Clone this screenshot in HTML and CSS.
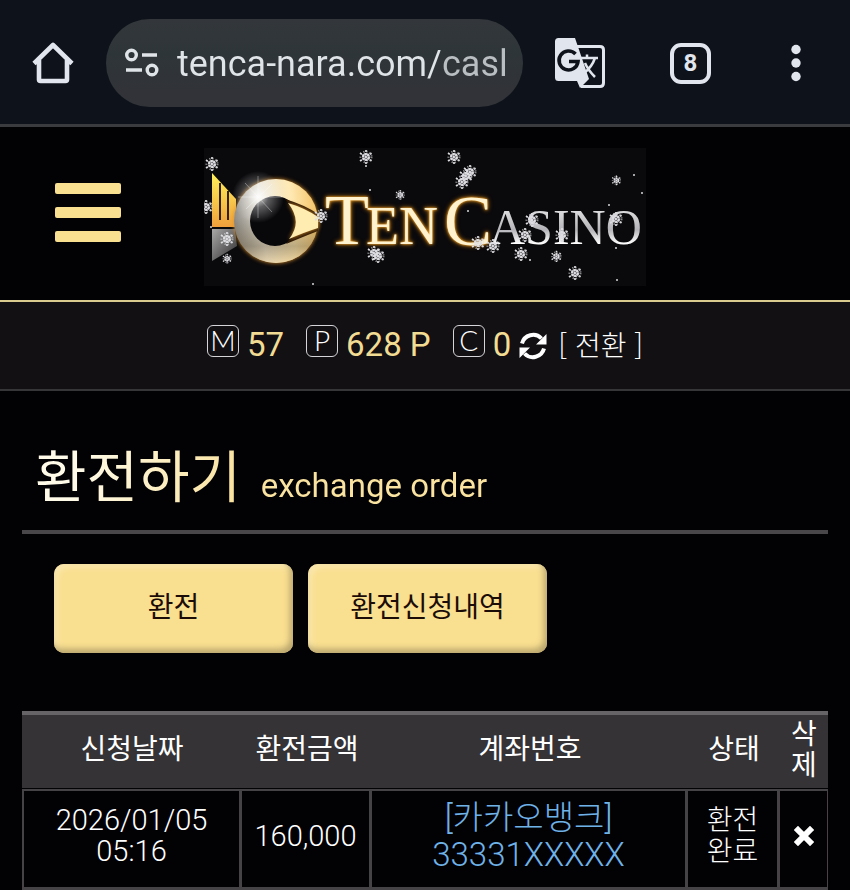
FILE: index.html
```html
<!DOCTYPE html>
<html lang="ko">
<head>
    <meta charset="UTF-8">
    <meta name="viewport" content="width=device-width, initial-scale=1.0">
    <title>환전하기</title>
    <link rel="stylesheet" href="styles.css">
</head>
<body>
    <div class="browser-bar">
        <button class="icon-btn home-btn" aria-label="Home">
            <svg width="42" height="42" viewBox="0 0 42 42" fill="none" stroke="#e1e5ee" stroke-width="4.6" stroke-linejoin="round">
                <path d="M2 21.500 21 3l19 18.500M7 18V37.500Q7 39 8.500 39H33.500Q35 39 35 37.500V18"/>
            </svg>
        </button>
        <div class="url-box">
            <svg width="34" height="30" viewBox="0 0 34 30" fill="none" stroke="#dfe4e8" stroke-width="3.400">
                <circle cx="6.500" cy="7" r="4.800"/>
                <path d="M17 7h15M1 22h16"/>
                <circle cx="27" cy="22" r="4.800"/>
            </svg>
            <input class="url-input" type="text" aria-label="Address" value="tenca-nara.com/casl">
        </div>
        <button class="icon-btn translate-btn" aria-label="Translate">
            <svg width="50" height="50" viewBox="0 0 50 50">
                <path d="M22 8.500H45Q48.500 8.500 48.500 12V45Q48.500 48.500 45 48.500H26" fill="none" stroke="#e1e5ee" stroke-width="3"/>
                <path d="M3.500 0H20L34 41 25 50 22 43H3.500Q0 43 0 39.500V3.500Q0 0 3.500 0Z" fill="#e1e5ee"/>
                <path d="M26 20h17M32 16.500V20M40 20Q37 29 29 35M30 25Q33 32 40 39" fill="none" stroke="#e1e5ee" stroke-width="2.500"/>
                <path d="M20.500 16A9.500 9.500 0 1 0 23 23.500H14" fill="none" stroke="#0e131b" stroke-width="3.600"/>
            </svg>
        </button>
        <button class="icon-btn tabs-btn">8</button>
        <button class="icon-btn more-btn" aria-label="More">
            <svg width="10" height="38" viewBox="0 0 10 38" fill="#e1e5ee">
                <circle cx="5" cy="5.500" r="4.700"/>
                <circle cx="5" cy="19" r="4.700"/>
                <circle cx="5" cy="32.500" r="4.700"/>
            </svg>
        </button>
    </div>

    <header class="site-header">
        <button class="menu-btn" aria-label="Menu">
            <span></span><span></span><span></span>
        </button>
        <a class="logo" href="#" aria-label="Ten Casino">
            <svg width="442" height="138" viewBox="0 0 442 138">
                <defs>
                    <linearGradient id="ring" x1="0" y1="0.600" x2="1" y2="0.500">
                        <stop offset="0" stop-color="#8b8985"/>
                        <stop offset="0.350" stop-color="#e8e3d6"/>
                        <stop offset="0.700" stop-color="#ffeab5"/>
                        <stop offset="1" stop-color="#f4c469"/>
                    </linearGradient>
                    <linearGradient id="shade" x1="0" y1="0" x2="0" y2="1">
                        <stop offset="0.450" stop-color="#5b4a2a" stop-opacity="0"/>
                        <stop offset="0.800" stop-color="#6a5a3c" stop-opacity="0.450"/>
                        <stop offset="1" stop-color="#e9c98b" stop-opacity="0.500"/>
                    </linearGradient>
                    <linearGradient id="tower" x1="0" y1="0" x2="0" y2="1">
                        <stop offset="0" stop-color="#fff05a"/>
                        <stop offset="1" stop-color="#f0a03c"/>
                    </linearGradient>
                    <linearGradient id="base" x1="0" y1="0" x2="1" y2="1">
                        <stop offset="0" stop-color="#aaa9a8"/>
                        <stop offset="1" stop-color="#2e2c2e"/>
                    </linearGradient>
                    <linearGradient id="silver" x1="0" y1="0" x2="0" y2="1">
                        <stop offset="0.200" stop-color="#dddcde"/>
                        <stop offset="0.550" stop-color="#b5b4b8"/>
                        <stop offset="0.800" stop-color="#fff"/>
                    </linearGradient>
                    <radialGradient id="flare">
                        <stop offset="0" stop-color="#fff" stop-opacity="0.900"/>
                        <stop offset="0.400" stop-color="#fff" stop-opacity="0.350"/>
                        <stop offset="1" stop-color="#fff" stop-opacity="0"/>
                    </radialGradient>
                    <g id="flake" fill="none" stroke="#dedee2">
                        <circle r="4" fill="#dedee2" fill-opacity="0.450" stroke="none"/>
                        <path d="M0-7V7M-6-4 6 4M-6 4 6-4" stroke-width="1.700" stroke-dasharray="2 1"/>
                        <circle r="3" stroke-width="2" stroke-dasharray="2 1"/>
                        <circle r="5.500" stroke-width="2" stroke-opacity="0.600" stroke-dasharray="1.300 1.900"/>
                    </g>
                </defs>
                <rect width="442" height="138" fill="#0a090b"/>
                <path d="M8 25 32 51V79H8Z" fill="url(#tower)"/>
                <path d="M16 35V72M24 43V72" stroke="#33230a" stroke-width="2"/>
                <path d="M8 81H31L33 98 8 113Z" fill="url(#base)"/>
                <g class="gold-glow">
                    <circle cx="72" cy="73" r="42" fill="url(#ring)"/>
                    <circle cx="72" cy="73" r="42" fill="url(#shade)"/>
                </g>
                <circle cx="71" cy="73" r="25" fill="#08070a"/>
                <path d="M81 51Q101 57 114 66V83Q101 88 82 96Q102 74 81 51Z" fill="#2a1604"/>
                <path d="M84 55Q101 60 114 69V80Q101 84 85 91Q99 74 84 55Z" fill="#ffecb0" class="gold-glow"/>
                <circle cx="54" cy="49" r="26" fill="url(#flare)"/>
                <path d="M54 28V70M34 49H78M41 35 68 64M68 36 42 61" stroke="#fff" stroke-opacity="0.350"/>
                <text class="logo-text logo-gold" y="96"><tspan x="121" class="cap">T</tspan><tspan x="162">EN</tspan></text>
                <text class="logo-text logo-gold cap" x="240" y="97">C</text>
                <text class="logo-text logo-silver" x="285" y="96">ASINO</text>
                <g>
                    <use href="#flake" x="8" y="16"/>
                    <use href="#flake" x="162" y="9"/>
                    <use href="#flake" x="196" y="47" transform="translate(59 14) scale(.7)"/>
                    <use href="#flake" x="117" y="68"/>
                    <use href="#flake" x="2" y="59"/>
                    <use href="#flake" x="23" y="91"/>
                    <use href="#flake" x="23" y="111" transform="translate(7 33) scale(.7)"/>
                    <use href="#flake" x="170" y="105"/>
                    <use href="#flake" x="174" y="108"/>
                    <use href="#flake" x="250" y="9"/>
                    <use href="#flake" x="266" y="24"/>
                    <use href="#flake" x="262" y="28"/>
                    <use href="#flake" x="258" y="34"/>
                    <use href="#flake" x="412" y="32" transform="translate(124 10) scale(.7)"/>
                    <use href="#flake" x="412" y="71"/>
                    <use href="#flake" x="321" y="87"/>
                    <use href="#flake" x="328" y="72"/>
                    <use href="#flake" x="358" y="87"/>
                    <use href="#flake" x="274" y="95"/>
                    <use href="#flake" x="289" y="98"/>
                    <use href="#flake" x="317" y="106"/>
                    <use href="#flake" x="353" y="108" transform="translate(70 22) scale(.8)"/>
                    <use href="#flake" x="371" y="125"/>
                </g>
                <g fill="#d8d8dc">
                    <circle cx="162" cy="18" r="1"/>
                    <circle cx="166" cy="42" r="1"/>
                    <circle cx="109" cy="136" r="1"/>
                    <circle cx="264" cy="63" r="1"/>
                    <circle cx="430" cy="27" r="1"/>
                    <circle cx="438" cy="45" r="1"/>
                    <circle cx="405" cy="57" r="1"/>
                    <circle cx="412" cy="100" r="1"/>
                    <circle cx="413" cy="132" r="1"/>
                    <circle cx="326" cy="112" r="1"/>
                    <circle cx="7" cy="79" r="1"/>
                </g>
            </svg>
        </a>
    </header>

    <div class="balance-bar">
        <div class="balance"><span class="badge">M</span><span class="amount">57</span></div>
        <div class="balance"><span class="badge">P</span><span class="amount">628 P</span></div>
        <div class="balance">
            <span class="badge">C</span><span class="amount">0</span>
            <button class="convert-btn">
                <svg width="28" height="28" viewBox="0 0 28 28">
                    <path d="M3 11.500A11.500 11.500 0 0 1 22.500 6.500M25 16.500A11.500 11.500 0 0 1 5.500 21.500" fill="none" stroke="#fff" stroke-width="4"/>
                    <path d="M27.500 2V12.500H17ZM.500 26V15.500H11Z" fill="#fff"/>
                </svg>
                <span>[ 전환 ]</span>
            </button>
        </div>
    </div>

    <main class="content">
        <h1 class="page-title">환전하기 <small>exchange order</small></h1>

        <div class="tabs">
            <button class="tab-btn">환전</button>
            <button class="tab-btn">환전신청내역</button>
        </div>

        <table class="order-table">
            <colgroup>
                <col class="col-date">
                <col class="col-amount">
                <col>
                <col class="col-status">
                <col class="col-delete">
            </colgroup>
            <thead>
                <tr>
                    <th>신청날짜</th>
                    <th>환전금액</th>
                    <th>계좌번호</th>
                    <th>상태</th>
                    <th>삭<br>제</th>
                </tr>
            </thead>
            <tbody>
                <tr>
                    <td class="num">2026/01/05<br>05:16</td>
                    <td class="num">160,000</td>
                    <td class="account">[카카오뱅크]<br>33331XXXXX</td>
                    <td>환전<br>완료</td>
                    <td>
                        <button class="delete-btn" aria-label="삭제">
                            <svg width="20" height="20" viewBox="0 0 20 20">
                                <path d="M4 4 16 16M16 4 4 16" stroke="#fff" stroke-width="6" stroke-linecap="square"/>
                            </svg>
                        </button>
                    </td>
                </tr>
            </tbody>
        </table>
    </main>
</body>
</html>
```
FILE: styles.css
```css
* {
    box-sizing: border-box;
}
body {
    margin: 0;
    background: #020104;
    color: #fff;
    font-family: Roboto, "Noto Sans CJK KR", sans-serif;
    font-size: 28px;
    font-weight: 300;
}
button {
    padding: 0;
    border: none;
    background: none;
    color: inherit;
    font: inherit;
    cursor: pointer;
}
svg {
    display: block;
}

/* Browser bar */
.browser-bar {
    display: flex;
    align-items: center;
    height: 127px;
    padding: 2px 49px 0 32px;
    background: #0e131b;
    border-bottom: 3px solid #3a3b3e;
}
.icon-btn {
    flex: none;
}
.url-box {
    display: flex;
    align-items: center;
    flex: 1;
    gap: 18px;
    min-width: 0;
    height: 88px;
    margin: 0 32px;
    padding: 0 12px 0 19px;
    border-radius: 44px;
    background: linear-gradient(#33373b, #2e3538 40%, #313338 80%);
}
.url-box svg {
    flex: none;
}
.url-input {
    flex: 1;
    min-width: 0;
    padding: 2px 0 0;
    border: none;
    outline: none;
    background: linear-gradient(90deg, #dfe4e8 263px, #b9bec2 263px);
    background-clip: text;
    -webkit-text-fill-color: transparent;
    font-family: Roboto, sans-serif;
    font-size: 36px;
    font-weight: 400;
}
.tabs-btn {
    width: 41px;
    height: 41px;
    margin: 0 80px 0 65px;
    border: 4px solid #e1e5ee;
    border-radius: 11px;
    color: #e1e5ee;
    font-size: 24px;
    font-weight: 700;
    line-height: 32px;
}

/* Site header */
.site-header {
    display: flex;
    align-items: center;
    gap: 83px;
    height: 175px;
    padding: 0 55px 2px;
    border-bottom: 2px solid #d9cb8e;
}
.site-header .logo {
    margin-top: 8px;
}
.menu-btn {
    display: flex;
    flex-direction: column;
    gap: 13px;
    width: 66px;
}
.menu-btn span {
    height: 11px;
    border-radius: 2px;
    background: #f9df90;
}
.gold-glow {
    filter: drop-shadow(0 0 2px #d9902a);
}
.logo-text {
    font-family: "Liberation Serif", serif;
    font-size: 54px;
}
.cap {
    font-size: 72px;
}
.logo-gold {
    fill: #fff3cf;
    filter: drop-shadow(0 0 1px #f5a52c) drop-shadow(0 0 2px #c47b12);
}
.logo-silver {
    fill: url(#silver);
    font-size: 50px;
}

/* Balances */
.balance-bar {
    display: flex;
    justify-content: center;
    gap: 22px;
    height: 89px;
    padding-top: 20px;
    background: #121013;
    border-bottom: 2px solid #363538;
}
.balance {
    display: flex;
    align-items: center;
    gap: 8px;
    height: 44px;
}
.badge {
    width: 32px;
    height: 32px;
    margin-top: -6px;
    border: 1px solid #d5d4d8;
    border-radius: 6px;
    font-family: Lato, sans-serif;
    font-size: 28px;
    font-weight: 300;
    line-height: 28px;
    text-align: center;
}
.amount {
    color: #f2dc94;
    font-size: 33px;
    font-weight: 400;
}
.convert-btn {
    display: flex;
    align-items: center;
    gap: 11px;
    font-family: "Noto Sans CJK KR", sans-serif;
    white-space: nowrap;
}
.convert-btn svg {
    margin-top: 4px;
}

/* Content */
.content {
    padding: 41px 22px 0;
}
.page-title {
    margin: 0 0 30px;
    padding: 0 13px 16px;
    border-bottom: 4px solid #49474a;
    font-family: "Noto Sans CJK KR", sans-serif;
    font-size: 56px;
    font-weight: 400;
    line-height: 82px;
    background: linear-gradient(100deg, #fffbe8 60px, #fae3a0 220px);
    background-clip: text;
    color: transparent;
}
.page-title small {
    margin-left: 4px;
    font-family: Roboto, sans-serif;
    font-size: 33px;
    line-height: 34px;
}
.tabs {
    display: flex;
    gap: 15px;
    padding: 0 32px;
    margin-bottom: 58px;
}
.tab-btn {
    width: 239px;
    height: 89px;
    padding-bottom: 8px;
    border-radius: 10px;
    background: #f9df90;
    box-shadow: inset -3px -4px 6px #b9a56d, inset 3px 3px 6px #fbeab5;
    color: #1c0c08;
    font-weight: 400;
}

.order-table {
    width: 100%;
    table-layout: fixed;
    border-collapse: separate;
    border-spacing: 0;
    border-top: 4px solid #666467;
    text-align: center;
    line-height: 31px;
}
.col-date {
    width: 220px;
}
.col-amount {
    width: 130px;
}
.col-status {
    width: 92px;
}
.col-delete {
    width: 48px;
}
.order-table th {
    height: 74px;
    padding: 0 0 4px;
    background: #353336;
    border-bottom: 1px solid #020104;
    font-weight: 400;
}
.order-table td {
    height: 101px;
    padding: 0 0 6px;
    border: solid #464347;
    border-width: 2px 3px 3px 0;
}
.order-table td:first-child {
    border-left-width: 2px;
}
.order-table td:last-child {
    border-right-width: 1px;
}
.order-table .num {
    font-size: 29px;
}
.order-table .account {
    color: #6fb2e8;
    font-size: 33px;
    line-height: 37px;
}
.delete-btn svg {
    margin-top: 6px;
}
```
